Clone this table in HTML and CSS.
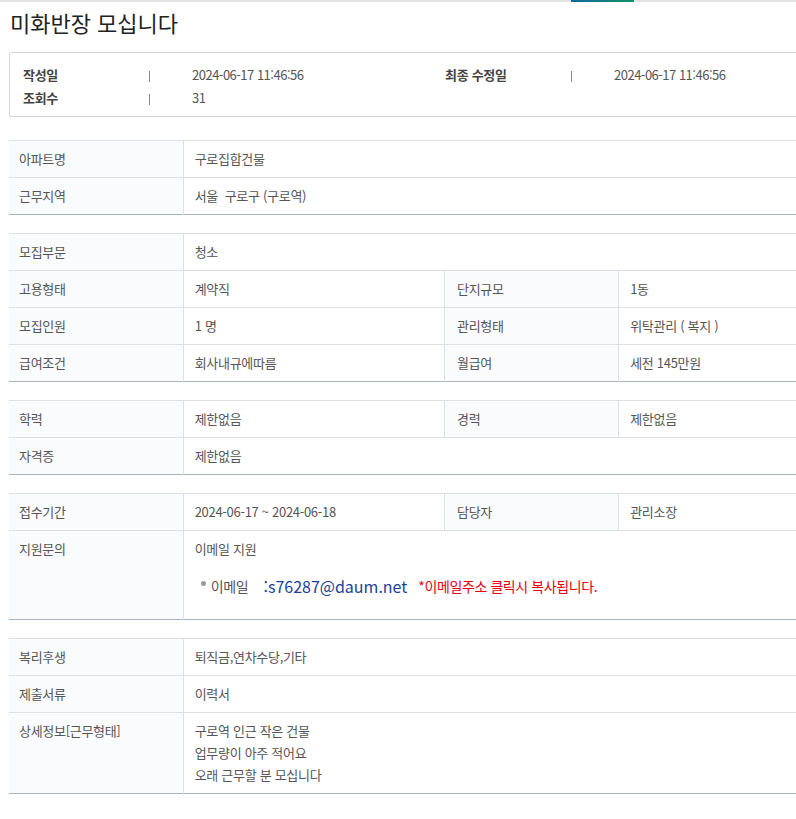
FILE: index.html
```html
<!DOCTYPE html>
<html lang="ko">
<head>
<meta charset="utf-8">
<title>미화반장 모십니다</title>
<link rel="stylesheet" href="styles.css">
</head>
<body>
<div class="topline"><span class="topline-accent"></span></div>
<div class="page">
  <h1 class="title">미화반장 모십니다</h1>

  <div class="meta">
    <div class="meta-group">
      <span class="meta-label">작성일</span><span class="meta-sep"></span><span class="meta-value">2024-06-17 11:46:56</span>
      <span class="meta-label">조회수</span><span class="meta-sep"></span><span class="meta-value">31</span>
    </div>
    <div class="meta-group">
      <span class="meta-label">최종 수정일</span><span class="meta-sep"></span><span class="meta-value">2024-06-17 11:46:56</span>
    </div>
  </div>

  <table class="info">
    <colgroup><col class="c-l"><col class="c-v"><col class="c-l"><col class="c-v"></colgroup>
    <tr><th>아파트명</th><td colspan="3">구로집합건물</td></tr>
    <tr><th>근무지역</th><td colspan="3">서울&nbsp; 구로구 (구로역)</td></tr>
  </table>

  <table class="info">
    <colgroup><col class="c-l"><col class="c-v"><col class="c-l"><col class="c-v"></colgroup>
    <tr><th>모집부문</th><td colspan="3">청소</td></tr>
    <tr><th>고용형태</th><td>계약직</td><th>단지규모</th><td>1동</td></tr>
    <tr><th>모집인원</th><td>1 명</td><th>관리형태</th><td>위탁관리 ( 복지 )</td></tr>
    <tr><th>급여조건</th><td>회사내규에따름</td><th>월급여</th><td>세전 145만원</td></tr>
  </table>

  <table class="info">
    <colgroup><col class="c-l"><col class="c-v"><col class="c-l"><col class="c-v"></colgroup>
    <tr><th>학력</th><td>제한없음</td><th>경력</th><td>제한없음</td></tr>
    <tr><th>자격증</th><td colspan="3">제한없음</td></tr>
  </table>

  <table class="info">
    <colgroup><col class="c-l"><col class="c-v"><col class="c-l"><col class="c-v"></colgroup>
    <tr><th>접수기간</th><td>2024-06-17 ~ 2024-06-18</td><th>담당자</th><td>관리소장</td></tr>
    <tr><th class="top">지원문의</th><td colspan="3" class="top">
      <div>이메일 지원</div>
      <ul class="contact">
        <li><span class="contact-key">이메일</span><span class="contact-mail">:s76287@daum.net</span><span class="contact-note">*이메일주소 클릭시 복사됩니다.</span></li>
      </ul>
    </td></tr>
  </table>

  <table class="info">
    <colgroup><col class="c-l"><col class="c-v"><col class="c-l"><col class="c-v"></colgroup>
    <tr><th>복리후생</th><td colspan="3">퇴직금,연차수당,기타</td></tr>
    <tr><th>제출서류</th><td colspan="3">이력서</td></tr>
    <tr><th class="top">상세정보[근무형태]</th><td colspan="3" class="top detail">구로역 인근 작은 건물<br>업무량이 아주 적어요<br>오래 근무할 분 모십니다</td></tr>
  </table>
</div>
</body>
</html>
```
FILE: styles.css
```css
html, body {
  margin: 0;
  padding: 0;
  background: #fff;
  overflow: hidden;
}
body {
  font-family: "Noto Sans CJK KR", "Noto Sans", sans-serif;
  color: #555;
  font-size: 13px;
  letter-spacing: -0.3px;
}
.topline {
  height: 2px;
  background: #e1e3e5;
  position: relative;
}
.topline-accent {
  position: absolute;
  left: 571px;
  top: 0;
  width: 63px;
  height: 2px;
  background: linear-gradient(90deg, #16679f, #0f9465);
}
.page {
  width: 871px;
  margin-left: 9px;
  padding-bottom: 40px;
}
.title {
  margin: 0;
  padding: 4px 0 0 1px;
  height: 46px;
  font-size: 22px;
  font-weight: 400;
  line-height: 32px;
  color: #222;
  letter-spacing: 0;
}
.meta {
  border: 1px solid #d5d8dc;
  border-radius: 2px;
  padding: 10px 0 7px 13px;
  display: grid;
  grid-template-columns: 422px 422px;
}
.meta-group {
  display: grid;
  grid-template-columns: 126px 43px 253px;
  grid-auto-rows: 23px;
  align-items: center;
}
.meta-label {
  font-weight: 700;
  color: #444;
}
.meta-sep {
  width: 0;
  height: 11px;
  margin-top: 3px;
  border-left: 1px solid #8a8a8a;
}
.meta-value {
  color: #555;
  letter-spacing: -0.5px;
}
.info {
  width: 871px;
  table-layout: fixed;
  border-collapse: collapse;
  border-top: 1px solid #a9b3bb;
  border-bottom: 1px solid #a9b3bb;
  margin-top: 23px;
}
.info + .info {
  margin-top: 18px;
}
.c-l { width: 174px; }
.c-v { width: 261px; }
.info th, .info td {
  height: 22px;
  padding: 7px 10px;
  line-height: 22px;
  text-align: left;
  font-weight: 400;
  vertical-align: middle;
  border-top: 1px solid #dcdfe3;
}
.info th {
  background: #f9fbfd;
  border-right: 1px solid #dcdfe3;
  color: #555;
}
.info td {
  padding-left: 11px;
  border-right: 1px solid #dcdfe3;
}
.info td:last-child {
  border-right: none;
}
.info td + th {
  padding-left: 12px;
}
.info .top {
  vertical-align: top;
}
.contact {
  list-style: none;
  margin: 15px 0;
  padding: 0 0 0 6px;
}
.contact li {
  display: flex;
  align-items: center;
  line-height: 22px;
}
.contact li::before {
  content: "";
  width: 5px;
  height: 5px;
  border-radius: 50%;
  background: #999;
  margin-right: 5px;
  position: relative;
  top: -3px;
}
.contact-key {
  font-size: 14px;
  color: #555;
  margin-right: 15px;
}
.contact-mail {
  font-size: 16px;
  color: #1a3f9a;
  letter-spacing: 0;
  margin-right: 11px;
}
.contact-note {
  font-size: 14px;
  color: #e60012;
  letter-spacing: -0.4px;
}
```
